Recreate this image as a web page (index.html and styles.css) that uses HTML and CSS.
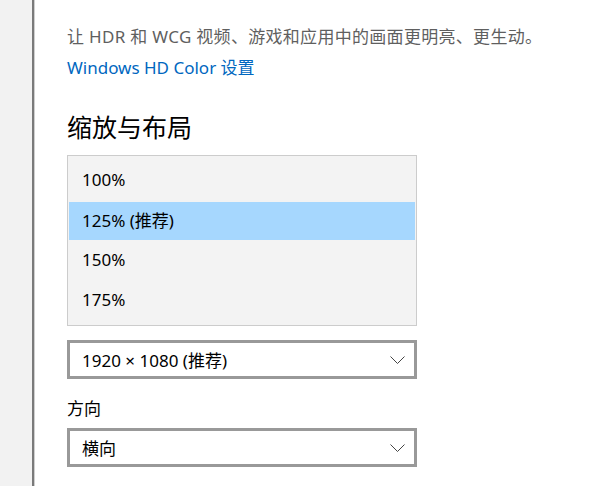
FILE: index.html
```html
<!DOCTYPE html>
<html>

<head>
    <meta charset="UTF-8">
    <title>显示设置</title>
    <link rel="stylesheet" href="styles.css">
</head>

<body>
    <div class="window">
        <!-- 左侧导航栏 -->
        <aside class="nav"></aside>

        <!-- 设置内容 -->
        <main class="content">
            <p class="desc">让 HDR 和 WCG 视频、游戏和应用中的画面更明亮、更生动。</p>
            <a class="link" href="#">Windows HD Color 设置</a>

            <h2 class="section-title">缩放与布局</h2>

            <!-- 缩放下拉列表（已展开） -->
            <ul class="scale-list">
                <li class="scale-item">100%</li>
                <li class="scale-item selected">125% (推荐)</li>
                <li class="scale-item">150%</li>
                <li class="scale-item">175%</li>
            </ul>

            <!-- 分辨率 -->
            <div class="select">
                <span>1920 × 1080 (推荐)</span>
                <svg class="chevron" width="15" height="8" viewBox="0 0 15 8">
                    <polyline points="0.5,0.5 7.5,7.5 14.5,0.5" fill="none" stroke="#444" stroke-width="1"/>
                </svg>
            </div>

            <!-- 方向 -->
            <div class="field-label">方向</div>
            <div class="select select-orient">
                <span>横向</span>
                <svg class="chevron" width="15" height="8" viewBox="0 0 15 8">
                    <polyline points="0.5,0.5 7.5,7.5 14.5,0.5" fill="none" stroke="#444" stroke-width="1"/>
                </svg>
            </div>
        </main>
    </div>
</body>

</html>
```

FILE: styles.css
```css
* {
    box-sizing: border-box;
}

html,
body {
    margin: 0;
    height: 100%;
}

body {
    font-family: "Noto Sans", "Noto Sans CJK SC", sans-serif;
    font-size: 17px;
    color: #000;
    background: #fff;
}

.window {
    display: flex;
    height: 100%;
}

.nav {
    width: 35px;
    background: #f2f2f2;
    border-right: 3px solid #7a7a7a;
    flex-shrink: 0;
    position: relative;
}

.nav::after {
    content: "";
    position: absolute;
    top: 0;
    bottom: 0;
    right: -3px;
    width: 1px;
    background: #cfcfcf;
}

.content {
    flex: 1;
    padding: 25px 0 0 32px;
}

.desc {
    margin: 0;
    line-height: 24px;
    letter-spacing: 0.3px;
    color: #5f5f5f;
}

.link {
    display: block;
    margin-top: 7px;
    line-height: 24px;
    color: #0067c0;
    text-decoration: none;
}

.section-title {
    margin: 30px 0 0;
    font-size: 25px;
    font-weight: normal;
    line-height: 34px;
}

.scale-list {
    list-style: none;
    margin: 11px 0 0;
    padding: 6px 0 5px;
    width: 350px;
    display: flex;
    flex-direction: column;
    gap: 2px;
    background: #f3f3f3;
    border: 1px solid #cccccc;
}

.scale-item {
    height: 38px;
    margin: 0 1px;
    padding: 0 0 3px 13px;
    display: flex;
    align-items: center;
}

.scale-item.selected {
    background: #a6d7fe;
}

.select {
    margin-top: 14px;
    width: 350px;
    height: 39px;
    border: 3px solid #999999;
    padding: 0 9px 0 12px;
    display: flex;
    align-items: center;
    justify-content: space-between;
}

.select-orient {
    margin-top: 7px;
}

.field-label {
    margin-top: 18px;
    line-height: 24px;
}
```
